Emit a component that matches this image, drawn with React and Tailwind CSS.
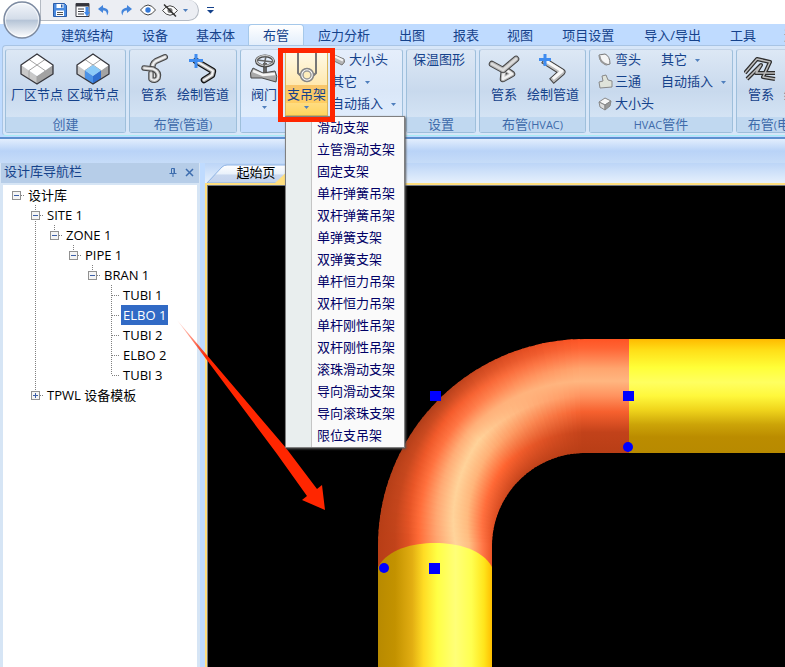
import React, { useState } from 'react';
import { clsx } from 'clsx';

// --- data ---
const TABS = ['建筑结构', '设备', '基本体', '布管', '应力分析', '出图', '报表', '视图', '项目设置', '导入/导出', '工具', '选项'];

const SUPPORTS = [
  '滑动支架', '立管滑动支架', '固定支架', '单杆弹簧吊架', '双杆弹簧吊架',
  '单弹簧支架', '双弹簧支架', '单杆恒力吊架', '双杆恒力吊架', '单杆刚性吊架',
  '双杆刚性吊架', '滚珠滑动支架', '导向滑动支架', '导向滚珠支架', '限位支吊架',
];

// cells: one guide per indent level
const TREE = [
  { label: '设计库', cells: ['root'] },
  { label: 'SITE 1', cells: ['blank', 'open-more'] },
  { label: 'ZONE 1', cells: ['blank', 'pipe', 'open'] },
  { label: 'PIPE 1', cells: ['blank', 'pipe', 'blank', 'open'] },
  { label: 'BRAN 1', cells: ['blank', 'pipe', 'blank', 'blank', 'open'] },
  { label: 'TUBI 1', cells: ['blank', 'pipe', 'blank', 'blank', 'blank', 'tee'] },
  { label: 'ELBO 1', cells: ['blank', 'pipe', 'blank', 'blank', 'blank', 'tee'] },
  { label: 'TUBI 2', cells: ['blank', 'pipe', 'blank', 'blank', 'blank', 'tee'] },
  { label: 'ELBO 2', cells: ['blank', 'pipe', 'blank', 'blank', 'blank', 'tee'] },
  { label: 'TUBI 3', cells: ['blank', 'pipe', 'blank', 'blank', 'blank', 'end'] },
  { label: 'TPWL 设备模板', cells: ['blank', 'closed'] },
];

// --- icons ---
const Caret = ({ className = '' }) => (
  <svg width="5" height="3" viewBox="0 0 5 3" className={clsx('shrink-0', className)}><path d="M0 0h5L2.5 3z" fill="#4f7fbd" /></svg>
);

function CubeIcon({ blue }) {
  return (
    <svg width="34" height="32" viewBox="-1 -1 34 32" strokeLinejoin="round">
      <path d="M0 11 16 22V30L0 20z" fill="#c9c9c9" />
      <path d="M32 11 16 22V30L32 20z" fill="#a3a3a3" />
      <path d="M16 0 32 11 16 22 0 11z" fill="#fff" />
      <path d="M8 5.5 24 16.5M24 5.5 8 16.5M8 16.5V25M24 16.5V25M16 22V30" fill="none" stroke="#a2a2a2" />
      {blue && (
        <>
          <path d="M16 11 24 16.5 16 22 8 16.5z" fill="#8ccbf8" />
          <path d="M8 16.5 16 22V30L8 25z" fill="#4b92e6" />
          <path d="M24 16.5 16 22V30L24 25z" fill="#2f6fd0" />
        </>
      )}
      <path d="M16 0 32 11V20L16 30 0 20V11z" fill="none" stroke="#36363c" strokeWidth="1.3" />
    </svg>
  );
}

// a bent tube: dark outline, grey body, light core
function Tube({ d, w = 5, core = '#f2f2f2' }) {
  return (
    <g fill="none" strokeLinecap="round" strokeLinejoin="round">
      <path d={d} stroke="#444" strokeWidth={w} />
      <path d={d} stroke="#b4b4b4" strokeWidth={w - 2} />
      <path d={d} stroke={core} strokeWidth={w - 4} />
    </g>
  );
}

const PipeSystemIcon = () => (
  <svg width="32" height="32" viewBox="0 0 32 32">
    <Tube d="M27 4 18 8Q13 11 15 18L16 25" w={6} />
    <Tube d="M6 15 15 16Q22 19 20 25 17 29 13 26L13 20" w={5.5} />
  </svg>
);

const PipeDrawIcon = () => (
  <svg width="32" height="32" viewBox="0 0 32 32">
    <g fill="none" strokeLinecap="round" strokeLinejoin="round">
      <path d="M9 8 26 18 25 22 17 27" stroke="#111" strokeWidth="6.5" />
      <path d="M9 8 26 18 25 22 17 27" stroke="#a8a8a8" strokeWidth="4" />
      <path d="M9 8 26 18 25 22 17 27" stroke="#f4f4f4" strokeWidth="2" />
    </g>
    <path d="M9 1V15M2 7.5H16" stroke="#3f8cf0" strokeWidth="3" />
  </svg>
);

const DuctSystemIcon = () => (
  <svg width="32" height="32" viewBox="0 0 32 32">
    <Tube d="M16 16 15 26 24 21 17 16" w={6.5} />
    <Tube d="M4 11 15 17 28 6" w={6.5} core="#dcdcdc" />
  </svg>
);

const DuctDrawIcon = () => (
  <svg width="32" height="32" viewBox="0 0 32 32">
    <g fill="none" strokeLinejoin="round" strokeLinecap="square">
      <path d="M9 9 25 19 17 26" stroke="#444" strokeWidth="7" />
      <path d="M9 9 25 19 17 26" stroke="#bdbdbd" strokeWidth="5" />
      <path d="M9 8 25 18 17 25" stroke="#f7f7f7" strokeWidth="3" />
    </g>
    <path d="M8 1V13M2 6.5H14" stroke="#3f8cf0" strokeWidth="3" />
  </svg>
);

const TrayIcon = () => (
  <svg width="34" height="32" viewBox="0 0 34 32" fill="none" strokeLinejoin="round">
    <path d="M1 20 13 6 26 9 19 24 31 26M3 26 17 12 12 20 31 20" stroke="#2d2d2d" strokeWidth="4" />
    <path d="M1 20 13 6 26 9 19 24 31 26M3 26 17 12 12 20 31 20" stroke="#bdbdbd" strokeWidth="1.5" />
  </svg>
);

const ValveIcon = () => (
  <svg width="30" height="32" viewBox="0 0 30 32">
    <path d="M16 10V20" stroke="#666" strokeWidth="4" />
    <ellipse cx="16" cy="8" rx="8.5" ry="5" fill="none" stroke="#444" strokeWidth="3" />
    <ellipse cx="16" cy="7.5" rx="8.5" ry="5" fill="none" stroke="#c6c6c6" strokeWidth="1.3" />
    <path d="M8 7 24 9M17 3 15 13" stroke="#666" strokeWidth="1.5" />
    <path d="M4 15 14 20 26 18Q29 23 27 29L13 25 2 25Q0 20 4 15z" fill="#a9a9a9" stroke="#4a4a4a" />
    <path d="M4 18 14 22 26 21" stroke="#f5f5f5" strokeWidth="2.5" fill="none" />
  </svg>
);

const HangerIcon = () => (
  <svg width="24" height="32" viewBox="0 0 24 32" fill="none">
    <path d="M3 0V20L6 23M21 0V20L18 23" stroke="#777" strokeWidth="2" />
    <circle cx="12" cy="22" r="6.5" fill="#fff" stroke="#858585" strokeWidth="1.5" />
    <circle cx="12" cy="22" r="4" fill="#ffeebd" stroke="#999" strokeWidth="1.5" />
  </svg>
);

const ReducerIcon = () => (
  <svg width="16" height="16" viewBox="0 0 16 16">
    <path d="M1 2 13 7Q15 10 11 13L1 8z" fill="#b5b5b5" stroke="#777" />
    <path d="M2 3.5 12 8.5" stroke="#f4f4f4" strokeWidth="2" />
  </svg>
);
const ElbowIcon = () => (
  <svg width="16" height="16" viewBox="0 0 16 16">
    <path d="M2 3 8 2Q13 4 13 12L9 13Q2 10 2 3z" fill="#f5f5f5" stroke="#777" />
    <path d="M2 4Q2 11 9 13L11 12Q4 10 3.5 4z" fill="#999" />
  </svg>
);
const TeeIcon = () => (
  <svg width="18" height="16" viewBox="0 0 18 16">
    <path d="M5 2 9 1 11 6 15 7V13L3 14 2 8 6 7z" fill="#dfe3da" stroke="#888" />
  </svg>
);
const BoxIcon = () => (
  <svg width="16" height="16" viewBox="0 0 16 16" stroke="#888" strokeLinejoin="round">
    <path d="M2 6 8 2 14 5 8 9z" fill="#f7f7f7" />
    <path d="M2 6 8 9V14L3 11z" fill="#ddd" />
    <path d="M14 5 8 9V14L13 10z" fill="#999" />
  </svg>
);

// --- quick access ---
const QuickButton = ({ title, children }) => (
  <button title={title} className="flex w-[22px] items-center justify-center">{children}</button>
);

function QuickAccess() {
  return (
    <div className="flex h-[21px] items-center rounded-r-full border border-t-0 border-[#b4bac3] bg-[#eceef3] pl-2 pr-[10px]">
      <QuickButton title="保存">
        <svg width="14" height="14" viewBox="0 0 14 14">
          <path d="M.5.5h11l2 2v11H.5z" fill="#4a8be0" stroke="#2b5ca8" />
          <path d="M3.5 1h7v4h-7zM3 7.5h8V13H3z" fill="#fff" />
          <path d="M8 1.5h1.5v3H8z" fill="#2b5ca8" />
          <path d="M4 9.5h6M4 11.5h6" stroke="#555" />
        </svg>
      </QuickButton>
      <QuickButton title="列表">
        <svg width="15" height="14" viewBox="0 0 15 14">
          <path d="M1 .5h13v13H1z" fill="#fff" stroke="#3c3c44" />
          <path d="M1 1h13v2.5H1z" fill="#34343c" />
          <path d="M3 6h6M3 8.5h6M3 11h6" stroke="#3c3c44" />
          <path d="M10.5 4h3v5H15l-3 4.5L9 9h1.5z" fill="#3f88ea" />
        </svg>
      </QuickButton>
      <QuickButton title="撤销">
        <svg width="12" height="11" viewBox="0 0 12 11"><path d="M5 0 0 4l5 4V5.5Q9 5 9 10.5 13 4 5 2.5z" fill="#4385dc" /></svg>
      </QuickButton>
      <QuickButton title="恢复">
        <svg width="12" height="11" viewBox="0 0 12 11"><path d="M7 0l5 4-5 4V5.5Q3 5 2.5 10.5-1 4 7 2.5z" fill="#4385dc" /></svg>
      </QuickButton>
      <QuickButton title="显示">
        <svg width="16" height="12" viewBox="0 0 16 12"><path d="M.5 6Q8-4 15.5 6 8 16 .5 6z" fill="#fff" stroke="#444" /><circle cx="8" cy="6" r="2.7" fill="#3579d8" /></svg>
      </QuickButton>
      <QuickButton title="隐藏">
        <svg width="16" height="13" viewBox="0 0 16 13"><path d="M.5 6.5Q8-3 15.5 6.5 8 16 .5 6.5z" fill="#fff" stroke="#444" /><circle cx="8" cy="6.5" r="2.5" fill="#777" /><path d="M2 .5 14 12.5" stroke="#333" strokeWidth="1.5" /></svg>
      </QuickButton>
      <Caret className="ml-[2px]" />
    </div>
  );
}

// --- ribbon ---
function Group({ label, active, className, children }) {
  return (
    <section
      className={clsx(
        'flex shrink-0 flex-col rounded-[3px] border border-[#9ebfdb] border-t-[#c3d3e6]',
        active ? 'bg-linear-to-b from-[#e5eefb] via-[#dae7f8] to-[#e3f0ff]' : 'bg-linear-to-b from-[#dde8f5] via-[#c8d9ed] to-[#dae9f8]',
        className,
      )}
    >
      <div className="flex h-[67px] px-[3px]">{children}</div>
      <h2 className={clsx('h-[15px] text-center leading-[15px] whitespace-nowrap text-[#3e6aaa]', active ? 'bg-[#c4dcfd]' : 'bg-[#c0d8f0]')}>{label}</h2>
    </section>
  );
}

const BigButton = ({ icon, label, caret }) => (
  <button className="flex shrink-0 flex-col items-center pt-[3px]">
    <span className="-mx-1 flex h-8 items-center">{icon}</span>
    <span className="px-[2px] leading-[18px] whitespace-nowrap">{label}</span>
    {caret && <Caret className="mt-[3px]" />}
  </button>
);

const SmallButton = ({ icon, label, caret }) => (
  <button className="flex h-[22px] items-center pb-[2px] whitespace-nowrap">
    {icon && <span className="flex w-[18px] shrink-0">{icon}</span>}
    {label}
    {caret && <Caret className="ml-2" />}
  </button>
);

const Latin = ({ children }) => <span className="text-[11px]">{children}</span>;

function SupportMenu({ open, onToggle }) {
  return (
    <div className="relative mt-[2px] ml-[6px] mr-[3px] h-[64px] w-[43px] shrink-0">
      <button
        onClick={onToggle}
        aria-expanded={open}
        className="flex h-full w-full flex-col items-center border border-[#d9b65a] bg-linear-to-b from-[#fff9e6] from-0% via-[#ffe9b0] via-50% to-[#ffd45e] to-100%"
      >
        <HangerIcon />
        <span className="w-full bg-linear-to-b from-[#f8c66d] to-[#ffce62] leading-[18px] whitespace-nowrap">支吊架</span>
        <Caret className="mt-[3px]" />
      </button>
      <span className="pointer-events-none absolute -inset-x-[7px] -top-[4px] -bottom-[6px] z-20 border-5 border-[#ff2600]" />
      {open && (
        <ul role="menu" className="absolute top-full left-0 z-10 w-[120px] border border-[#808080] bg-[#fafafa] shadow-[1px_1px_2px_#555]">
          {SUPPORTS.map((name) => (
            <li key={name} className="flex h-[22px]">
              <span className="w-[26px] shrink-0 border-r border-[#c5c5c5] bg-[#e9eeee]" />
              <button role="menuitem" className="pl-[5px] whitespace-nowrap text-[#000066] hover:bg-[#ffe7a2]">{name}</button>
            </li>
          ))}
        </ul>
      )}
    </div>
  );
}

function Ribbon() {
  const [open, setOpen] = useState(true);
  return (
    <div className="border-b-2 border-[#5d90cf] bg-[#bfdbff] pb-px pl-[2px] text-[#15428b]">
      <div className="flex gap-[3px] rounded-l border border-r-0 border-[#a8c4e4] border-b-[#a6edf5] bg-[#d7e6f8] pt-[3px] pb-[2px] pl-[2px]">
        <Group label="创建" className="w-[121px]">
          <BigButton icon={<CubeIcon />} label="厂区节点" />
          <BigButton icon={<CubeIcon blue />} label="区域节点" />
        </Group>
        <Group label={<>布管<Latin>(</Latin>管道<Latin>)</Latin></>} className="w-[108px]">
          <div className="flex gap-[6px] pl-[6px]">
            <BigButton icon={<PipeSystemIcon />} label="管系" />
            <BigButton icon={<PipeDrawIcon />} label="绘制管道" />
          </div>
        </Group>
        <Group active className="w-[163px]">
          <div className="flex pl-[5px]">
            <BigButton icon={<ValveIcon />} label="阀门" caret />
            <SupportMenu open={open} onToggle={() => setOpen(!open)} />
            <div className="flex flex-col">
              <SmallButton icon={<ReducerIcon />} label="大小头" />
              <SmallButton label="其它" caret />
              <SmallButton label="自动插入" caret />
            </div>
          </div>
        </Group>
        <Group label="设置" className="w-[70px]">
          <div className="pl-[3px]"><SmallButton label="保温图形" /></div>
        </Group>
        <Group label={<>布管<Latin>(HVAC)</Latin></>} className="w-[107px]">
          <div className="flex gap-[6px] pl-[6px]">
            <BigButton icon={<DuctSystemIcon />} label="管系" />
            <BigButton icon={<DuctDrawIcon />} label="绘制管道" />
          </div>
        </Group>
        <Group label={<><Latin>HVAC</Latin>管件</>} className="w-[144px]">
          <div className="flex w-[68px] flex-col pl-1">
            <SmallButton icon={<ElbowIcon />} label="弯头" />
            <SmallButton icon={<TeeIcon />} label="三通" />
            <SmallButton icon={<BoxIcon />} label="大小头" />
          </div>
          <div className="flex flex-col">
            <SmallButton label="其它" caret />
            <SmallButton label="自动插入" caret />
          </div>
        </Group>
        <Group label={<>布管<Latin>(</Latin>电缆桥架<Latin>)</Latin></>} className="w-[108px]">
          <div className="flex gap-[6px] pl-[6px]">
            <BigButton icon={<TrayIcon />} label="管系" />
            <BigButton icon={<DuctDrawIcon />} label="绘制管道" />
          </div>
        </Group>
      </div>
    </div>
  );
}

// --- tree panel ---
function Guide({ kind }) {
  const isBox = kind === 'root' || kind.startsWith('open') || kind === 'closed';
  const up = kind !== 'root' && kind !== 'blank';
  const down = kind === 'pipe' || kind === 'tee' || kind === 'open-more';
  const across = isBox || kind === 'tee' || kind === 'end';
  return (
    <svg width="19" height="20" viewBox="0 0 19 20" className="shrink-0" shapeRendering="crispEdges">
      <g stroke="#808080" strokeDasharray="1 1">
        {up && <path d="M9.5 0V10" />}
        {down && <path d="M9.5 10V20" />}
        {across && <path d="M10 10.5H18" />}
      </g>
      {isBox && (
        <>
          <rect x="5.5" y="6.5" width="8" height="8" fill="#f4f4f4" stroke="#919191" />
          <path d="M7 10.5H12" stroke="#3b5fa8" />
          {kind === 'closed' && <path d="M9.5 8V13" stroke="#3b5fa8" />}
        </>
      )}
    </svg>
  );
}

function Navigator() {
  const [selected, setSelected] = useState('ELBO 1');
  return (
    <aside className="flex w-[200px] shrink-0 flex-col bg-[#d6e5f5] pr-[3px] pl-[3px]">
      <header className="-mx-[2px] flex h-[20px] items-center bg-[#b6cde8] pb-[2px] pl-[3px] text-[#15428b]">
        <h2 className="flex-1">设计库导航栏</h2>
        <button title="固定" className="mr-2">
          <svg width="8" height="9" viewBox="0 0 8 9" fill="none" stroke="#3d6dae"><path d="M2.5 5V.5H5.5V5M5 .5V5M.5 5.5H7.5M4 6V9" /></svg>
        </button>
        <button title="关闭" className="mr-[5px]">
          <svg width="9" height="9" viewBox="0 0 9 9"><path d="M1 1 8 8M8 1 1 8" stroke="#3d6dae" strokeWidth="1.5" /></svg>
        </button>
      </header>
      <ul role="tree" className="mt-[2px] flex-1 bg-white pl-1 text-black">
        {TREE.map(({ label, cells }) => (
          <li key={label} role="treeitem" aria-selected={selected === label} className="flex h-5">
            {cells.map((kind, i) => <Guide key={i} kind={kind} />)}
            <button
              onClick={() => setSelected(label)}
              className={clsx('px-[2px] leading-5 whitespace-nowrap', selected === label && 'bg-[#316ac5] text-white')}
            >
              {label}
            </button>
          </li>
        ))}
      </ul>
    </aside>
  );
}

// --- 3D view ---
const CX = 377;
const CY = 360;
const R_OUT = 207;
const R_IN = 93;

// colour profiles of the bend, from the outer wall (0) to the inner wall (1)
const START = [[0, 184, 62, 22], [0.15, 193, 67, 26], [0.27, 224, 82, 36], [0.36, 255, 106, 54], [0.52, 255, 165, 112], [0.68, 255, 212, 155], [0.8, 255, 190, 130], [0.92, 255, 118, 70], [1, 236, 84, 38]];
const MIDDLE = [[0, 176, 62, 26], [0.08, 205, 76, 34], [0.16, 245, 92, 44], [0.26, 255, 118, 68], [0.38, 255, 175, 120], [0.5, 255, 210, 153], [0.64, 255, 176, 118], [0.82, 255, 100, 48], [1, 196, 68, 28]];
const FINISH = [[0, 255, 84, 36], [0.08, 255, 100, 52], [0.16, 255, 128, 78], [0.26, 255, 165, 110], [0.37, 255, 182, 128], [0.5, 255, 146, 94], [0.64, 246, 96, 46], [0.82, 194, 66, 26], [1, 184, 62, 22]];

const mix = (a, b, k) => a.map((stop, i) => stop.map((v, j) => v + (b[i][j] - v) * k));
const rgb = ([, r, g, b]) => `rgb(${Math.round(r)},${Math.round(g)},${Math.round(b)})`;
const profileAt = (k) => (k < 0.5 ? mix(START, MIDDLE, k * 2) : mix(MIDDLE, FINISH, k * 2 - 1));

const STEPS = 45;
const point = (radius, deg) => {
  const a = (deg * Math.PI) / 180;
  return `${CX - radius * Math.cos(a)} ${CY - radius * Math.sin(a)}`;
};
const WEDGES = Array.from({ length: STEPS }, (_, i) => {
  const from = (i * 90) / STEPS;
  const to = Math.min(90, from + 90 / STEPS + 0.6);
  return {
    id: `bend${i}`,
    stops: profileAt(i / (STEPS - 1)).reverse(),
    d: `M${point(R_OUT, from)}A${R_OUT} ${R_OUT} 0 0 1 ${point(R_OUT, to)}L${point(R_IN, to)}A${R_IN} ${R_IN} 0 0 0 ${point(R_IN, from)}z`,
  };
});

const YELLOW_V = [[0, '#b88a00'], [0.15, '#c39200'], [0.3, '#e2ae12'], [0.4, '#ffdc24'], [0.52, '#ffff45'], [0.68, '#ffff78'], [0.82, '#ffff50'], [0.93, '#ffe51c'], [1, '#ffbe00']];
const YELLOW_H = [[0, '#ffba00'], [0.1, '#ffdf18'], [0.25, '#ffff38'], [0.38, '#ffff60'], [0.5, '#fff83c'], [0.62, '#f0d51c'], [0.75, '#cca408'], [0.86, '#bb8c00'], [1, '#b88a00']];

const Stops = ({ list }) => list.map(([at, color]) => <stop key={at} offset={at} stopColor={color} />);
const asStops = (profile) => profile.map((s) => [s[0], rgb(s)]);

function Viewport() {
  return (
    <svg width="100%" height="100%" className="absolute inset-0">
      <defs>
        <linearGradient id="yellowV"><Stops list={YELLOW_V} /></linearGradient>
        <linearGradient id="yellowH" x2="0" y2="1"><Stops list={YELLOW_H} /></linearGradient>
        <linearGradient id="orangeV"><Stops list={asStops(START)} /></linearGradient>
        <linearGradient id="orangeH" x2="0" y2="1"><Stops list={asStops(FINISH)} /></linearGradient>
        {WEDGES.map(({ id, stops }) => (
          <radialGradient key={id} id={id} gradientUnits="userSpaceOnUse" cx={CX} cy={CY} r={R_OUT}>
            {stops.map((s) => (
              <stop key={s[0]} offset={1 - (s[0] * (R_OUT - R_IN)) / R_OUT} stopColor={rgb(s)} />
            ))}
          </radialGradient>
        ))}
      </defs>
      <rect x="170" y="359" width="114" height="24" fill="url(#orangeV)" />
      {WEDGES.map(({ id, d }) => <path key={id} d={d} fill={`url(#${id})`} />)}
      <rect x="376" y="153" width="46" height="114" fill="url(#orangeH)" />
      <rect x="421" y="153" width="3000" height="114" fill="url(#yellowH)" />
      <path d="M170 381C180 363 205 357 227 357S274 363 284 381V3000H170z" fill="url(#yellowV)" />
      <g fill="#0000ff">
        <rect x="222" y="205" width="11" height="10" />
        <rect x="415" y="205" width="11" height="10" />
        <rect x="221" y="377" width="11" height="11" />
        <circle cx="420" cy="261" r="5" />
        <circle cx="176" cy="382" r="5" />
      </g>
    </svg>
  );
}

function Document() {
  return (
    <main className="flex min-w-0 flex-1 flex-col">
      <nav className="flex h-[20px] bg-linear-to-b from-[#bcd5f7] to-[#e6f0fc]">
        <div className="relative flex h-full w-[102px] justify-center">
          <svg width="100" height="20" viewBox="0 0 100 20" className="absolute inset-0">
            <defs><linearGradient id="tab" x2="0" y2="1"><stop offset="0" stopColor="#fff" /><stop offset=".5" stopColor="#e9f1fb" /><stop offset=".55" stopColor="#c9d8ef" /><stop offset="1" stopColor="#c3d3ee" /></linearGradient></defs>
            <path d="M2 20 17 4Q19 2 22 2H95V20z" fill="url(#tab)" stroke="#8db2e3" />
            <path d="M70 20 88 3H100V20z" fill="#ffdf7f" />
          </svg>
          <button className="relative pb-[2px] leading-[18px] text-black">起始页</button>
        </div>
      </nav>
      <div className="flex flex-1 flex-col border-t-2 border-l-2 border-[#ffdf7f]">
        <div className="relative flex-1 overflow-hidden border-t border-l border-[#6f7683] bg-black">
          <Viewport />
        </div>
      </div>
    </main>
  );
}

export default function App() {
  const [tab, setTab] = useState('布管');
  return (
    <div className="relative flex min-h-screen flex-col overflow-hidden bg-[#bfdbff] font-['Open_Sans','Noto_Sans_CJK_SC',sans-serif] text-[13px]">
      {/* title bar with quick access */}
      <header className="flex h-6 items-start bg-white pl-10">
        <QuickAccess />
        <button title="自定义" className="ml-2 mt-[7px]">
          <svg width="7" height="7" viewBox="0 0 7 7"><path d="M0 .5H7" stroke="#15428b" /><path d="M0 3H7L3.5 6.5z" fill="#15428b" /></svg>
        </button>
      </header>

      <nav className="flex h-[21px] items-end pl-[46px] text-[#15428b]">
        {TABS.map((name) => (
          <button
            key={name}
            onClick={() => setTab(name)}
            className={clsx(
              'h-5 shrink-0 whitespace-nowrap leading-5',
              name.length > 3 ? 'px-[15px]' : 'px-[14px]',
              tab === name && 'rounded-t-[3px] bg-linear-to-b from-white to-[#e3eefb] shadow-[0_0_0_1px_#a5c8ea]',
            )}
          >
            {name}
          </button>
        ))}
      </nav>

      <Ribbon />
      <div className="h-6 shrink-0 bg-linear-to-b from-[#e3eefd] via-[#b9d3f7] to-[#c6dcf8]" />

      <div className="flex flex-1 gap-[5px]">
        <Navigator />
        <Document />
      </div>

      {/* application button */}
      <button title="应用程序" className="absolute top-[1px] left-[3px]">
        <svg width="38" height="38" viewBox="0 0 38 38">
          <defs>
            <linearGradient id="orb" x2="0" y2="1">
              <stop offset="0" stopColor="#f4f7fb" /><stop offset=".48" stopColor="#d3dce9" />
              <stop offset=".5" stopColor="#b4c3d6" /><stop offset="1" stopColor="#fff" />
            </linearGradient>
          </defs>
          <circle cx="19" cy="19" r="18" fill="url(#orb)" stroke="#7d8ba1" strokeWidth="1.5" />
          <circle cx="19" cy="19" r="16.5" fill="none" stroke="#fff" strokeOpacity=".7" />
        </svg>
      </button>

      {/* callout from the selected node to the bend */}
      <svg width="150" height="192" viewBox="0 0 150 192" className="pointer-events-none absolute top-[320px] left-[177px]">
        <defs><linearGradient id="fade" x2="1" y2="1"><stop offset="0" stopColor="#ff2600" stopOpacity=".1" /><stop offset=".2" stopColor="#ff2600" /></linearGradient></defs>
        <path d="M0 0 109 128 140 169 145 165 148 190 125 180 130 176 100 134z" fill="url(#fade)" />
      </svg>
    </div>
  );
}
